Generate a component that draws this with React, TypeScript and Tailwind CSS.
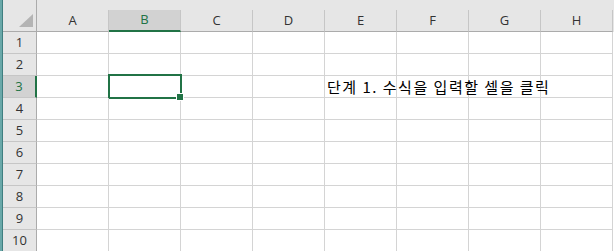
import React from 'react';

// --- Spreadsheet sheet view ---

const columns = ['A', 'B', 'C', 'D', 'E', 'F', 'G', 'H'];
const rows = [1, 2, 3, 4, 5, 6, 7, 8, 9, 10];

const uiFont = { fontFamily: '"Open Sans", "Noto Sans", "Liberation Sans", sans-serif' };
const cellFont = { fontFamily: '"Noto Sans CJK KR", "Noto Sans", sans-serif' };

const CornerCell = () => (
    <div className="relative h-[32px] w-[34px] shrink-0 border-r border-b border-[#ababab]">
        <svg className="absolute right-[3px] bottom-[4px]" width="14" height="13" viewBox="0 0 14 13">
            <polygon points="14,0 14,13 0,13" fill="#b4b4b4" />
        </svg>
    </div>
);

const ColumnHeader = ({ label, active }: { label: string; active: boolean }) => (
    <div className="flex h-[32px] w-[72px] shrink-0 flex-col">
        <div className="h-[10px]" />
        <div
            className={
                active
                    ? 'flex h-[22px] items-center justify-center border-r border-b-2 border-r-[#c6c6c6] border-b-[#217346] bg-[#d2d2d2] text-[13px] text-[#217346]'
                    : 'flex h-[22px] items-center justify-center border-r border-b border-r-[#c6c6c6] border-b-[#ababab] text-[13px] text-[#333]'
            }
        >
            {label}
        </div>
    </div>
);

const RowHeader = ({ n, active }: { n: number; active: boolean }) => (
    <div
        className={
            active
                ? 'flex h-[22px] w-[34px] shrink-0 items-center justify-center border-r-2 border-b border-r-[#217346] border-b-[#c6c6c6] bg-[#d2d2d2] text-[13px] text-[#217346]'
                : 'flex h-[22px] w-[34px] shrink-0 items-center justify-center border-r border-b border-r-[#ababab] border-b-[#c6c6c6] text-[13px] text-[#333]'
        }
    >
        {n}
    </div>
);

const Cell = ({ children }: { children?: React.ReactNode }) => (
    <div className="relative h-[22px] w-[72px] shrink-0 border-r border-b border-[#d4d4d4]">{children}</div>
);

export default function App() {
    return (
        <div className="flex h-[251px] w-[614px] overflow-hidden bg-white" style={uiFont}>
            {/* window edge */}
            <div className="flex w-[3px] shrink-0">
                <div className="w-[2px] bg-[#6aa8a9]" />
                <div className="w-[1px] bg-[#3f7f80]" />
            </div>

            <div className="flex flex-1 flex-col">
                <div className="flex bg-[#e6e6e6]">
                    <CornerCell />
                    {columns.map((c) => (
                        <ColumnHeader key={c} label={c} active={c === 'B'} />
                    ))}
                </div>

                {rows.map((r) => (
                    <div key={r} className="flex">
                        <div className="bg-[#e6e6e6]">
                            <RowHeader n={r} active={r === 3} />
                        </div>
                        {columns.map((c) => (
                            <Cell key={c}>
                                {r === 3 && c === 'B' && (
                                    <>
                                        <div className="absolute -top-[2px] -left-[1px] h-[25px] w-[74px] border-2 border-[#217346]" />
                                        <div className="absolute -right-[4px] -bottom-[4px] z-20 h-[8px] w-[8px] border border-white bg-[#217346]" />
                                    </>
                                )}
                                {r === 3 && c === 'E' && (
                                    <span
                                        className="absolute top-0 left-[2px] z-10 whitespace-nowrap text-[15px] leading-[22px] tracking-[1.5px] text-black"
                                        style={cellFont}
                                    >
                                        단계 1. 수식을 입력할 셀을 클릭
                                    </span>
                                )}
                            </Cell>
                        ))}
                    </div>
                ))}
            </div>
        </div>
    );
}
